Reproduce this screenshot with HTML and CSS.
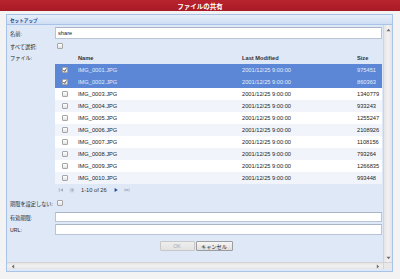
FILE: index.html
```html
<!DOCTYPE html>
<html lang="ja">
<head>
  <meta charset="UTF-8">
  <meta name="viewport" content="width=device-width, initial-scale=1.0">
  <title>ファイルの共有</title>
  <link rel="stylesheet" href="styles.css">
</head>
<body>

<div class="window">
  <div class="titlebar">ファイルの共有</div>
  <div class="frame">
    <div class="panel">
      <div class="panel-head">セットアップ</div>
      <div class="panel-body">
        <div class="content">

          <div class="row row-name">
            <div class="label">名前:</div>
            <div class="field"><div class="input">share</div></div>
          </div>

          <div class="row row-check">
            <div class="label">すべて選択:</div>
            <div class="field"><span class="cb"></span></div>
          </div>

          <div class="row row-files">
            <div class="label label-top">ファイル:</div>
            <div class="field">
              <div class="grid">
                <div class="grid-row grid-head">
                  <div></div>
                  <div class="cell">Name</div>
                  <div class="cell">Last Modified</div>
                  <div class="cell">Size</div>
                </div>
                <div class="grid-row sel">
                  <div class="cell-cb"><span class="cb checked"><svg width="4" height="4" viewBox="0 0 4 4"><path d="M0.4 2 L1.6 3.3 L3.6 0.5" fill="none" stroke="#333" stroke-width="0.9"/></svg></span></div>
                  <div class="cell">IMG_0001.JPG</div>
                  <div class="cell">2001/12/25 9:00:00</div>
                  <div class="cell">975451</div>
                </div>
                <div class="grid-row sel">
                  <div class="cell-cb"><span class="cb checked"><svg width="4" height="4" viewBox="0 0 4 4"><path d="M0.4 2 L1.6 3.3 L3.6 0.5" fill="none" stroke="#333" stroke-width="0.9"/></svg></span></div>
                  <div class="cell">IMG_0002.JPG</div>
                  <div class="cell">2001/12/25 9:00:00</div>
                  <div class="cell">860363</div>
                </div>
                <div class="grid-row odd">
                  <div class="cell-cb"><span class="cb"></span></div>
                  <div class="cell">IMG_0003.JPG</div>
                  <div class="cell">2001/12/25 9:00:00</div>
                  <div class="cell">1340779</div>
                </div>
                <div class="grid-row even">
                  <div class="cell-cb"><span class="cb"></span></div>
                  <div class="cell">IMG_0004.JPG</div>
                  <div class="cell">2001/12/25 9:00:00</div>
                  <div class="cell">933243</div>
                </div>
                <div class="grid-row odd">
                  <div class="cell-cb"><span class="cb"></span></div>
                  <div class="cell">IMG_0005.JPG</div>
                  <div class="cell">2001/12/25 9:00:00</div>
                  <div class="cell">1255247</div>
                </div>
                <div class="grid-row even">
                  <div class="cell-cb"><span class="cb"></span></div>
                  <div class="cell">IMG_0006.JPG</div>
                  <div class="cell">2001/12/25 9:00:00</div>
                  <div class="cell">2108926</div>
                </div>
                <div class="grid-row odd">
                  <div class="cell-cb"><span class="cb"></span></div>
                  <div class="cell">IMG_0007.JPG</div>
                  <div class="cell">2001/12/25 9:00:00</div>
                  <div class="cell">1108156</div>
                </div>
                <div class="grid-row even">
                  <div class="cell-cb"><span class="cb"></span></div>
                  <div class="cell">IMG_0008.JPG</div>
                  <div class="cell">2001/12/25 9:00:00</div>
                  <div class="cell">793264</div>
                </div>
                <div class="grid-row odd">
                  <div class="cell-cb"><span class="cb"></span></div>
                  <div class="cell">IMG_0009.JPG</div>
                  <div class="cell">2001/12/25 9:00:00</div>
                  <div class="cell">1266835</div>
                </div>
                <div class="grid-row even">
                  <div class="cell-cb"><span class="cb"></span></div>
                  <div class="cell">IMG_0010.JPG</div>
                  <div class="cell">2001/12/25 9:00:00</div>
                  <div class="cell">993448</div>
                </div>
                <div class="pager">
                  <span class="pg-icon"><svg width="6" height="6" viewBox="0 0 6 6"><rect x="0.8" y="1.2" width="0.8" height="3.6" fill="#a4adb8"/><path d="M5 1.2 L2.2 3 L5 4.8 Z" fill="#a4adb8"/></svg></span>
                  <span class="pg-icon pg-prev"><svg width="6" height="6" viewBox="0 0 6 6"><circle cx="3" cy="3" r="2.6" fill="#cbd6e6"/><path d="M3.8 1.6 L1.9 3 L3.8 4.4 Z" fill="#9aa6b6"/></svg></span>
                  <span class="pg-text">1-10 of 26</span>
                  <span class="pg-icon pg-next"><svg width="6" height="6" viewBox="0 0 6 6"><path d="M1.6 1 L4.8 3 L1.6 5 Z" fill="#1f4f9e"/></svg></span>
                  <span class="pg-icon pg-last"><svg width="6" height="6" viewBox="0 0 6 6"><path d="M0.6 1.4 L2.6 3 L0.6 4.6 Z M2.6 1.4 L4.6 3 L2.6 4.6 Z" fill="#a4adb8"/><rect x="4.7" y="1.4" width="0.7" height="3.2" fill="#a4adb8"/></svg></span>
                </div>
              </div>
            </div>
          </div>

          <div class="row row-expire">
            <div class="label">期限を設定しない:</div>
            <div class="field"><span class="cb"></span></div>
          </div>

          <div class="row row-date">
            <div class="label">有効期限:</div>
            <div class="field"><div class="input input-date"></div></div>
          </div>

          <div class="row row-url">
            <div class="label">URL:</div>
            <div class="field"><div class="input input-url"></div></div>
          </div>

          <div class="buttons">
            <button class="btn btn-ok" disabled>OK</button>
            <button class="btn btn-cancel">キャンセル</button>
          </div>

        </div>
        <div class="vscroll">
          <svg width="5" height="4" viewBox="0 0 5 4"><path d="M0.5 3.2 L2.5 0.8 L4.5 3.2 Z" fill="#6d6d6d"/></svg>
          <svg width="5" height="4" viewBox="0 0 5 4"><path d="M0.5 0.8 L2.5 3.2 L4.5 0.8 Z" fill="#6d6d6d"/></svg>
        </div>
        <div class="hscroll">
          <svg width="4" height="5" viewBox="0 0 4 5"><path d="M3.2 0.5 L0.8 2.5 L3.2 4.5 Z" fill="#6d6d6d"/></svg>
          <svg width="4" height="5" viewBox="0 0 4 5"><path d="M0.8 0.5 L3.2 2.5 L0.8 4.5 Z" fill="#6d6d6d"/></svg>
        </div>
        <div class="corner"></div>
      </div>
    </div>
  </div>
</div>

</body>
</html>
```

FILE: styles.css
```css
body {
  margin: 0;
  font-family: "Liberation Sans", Arial, "Noto Sans CJK JP", sans-serif;
  font-size: 5.7px;
  color: #222;
  background-color: #f3f3f3;
}
.window {
  width: 400px;
  height: 279px;
  display: flex;
  flex-direction: column;
  background-color: #f3f3f3;
}
.titlebar {
  height: 11px;
  background: linear-gradient(#b9232e, #a81b25);
  color: #fff;
  font-weight: bold;
  font-size: 6.5px;
  display: flex;
  align-items: center;
  justify-content: center;
}
.frame {
  flex: 1;
  padding: 3px 7px 7px 6px;
  min-height: 0;
}
.panel {
  height: 100%;
  box-sizing: border-box;
  border: 1px solid #a9c3e8;
  background-color: #dfe8f6;
  display: flex;
  flex-direction: column;
}
.panel-head {
  height: 9px;
  border-bottom: 1px solid #a9c3e8;
  background: linear-gradient(#e6eef9, #cfdef3);
  color: #15428b;
  font-weight: bold;
  font-size: 4.6px;
  padding-left: 3px;
  display: flex;
  align-items: center;
}
.panel-body {
  flex: 1;
  min-height: 0;
  display: grid;
  grid-template-columns: 1fr 9px;
  grid-template-rows: 1fr 7px;
  padding-bottom: 2px;
}
.content {
  padding: 2px 1px 0 3px;
  overflow: hidden;
}
.row {
  display: flex;
  align-items: center;
}
.label {
  width: 45px;
  flex: none;
  font-size: 5.2px;
  color: #222;
}
.label-top {
  align-self: flex-start;
  height: 12px;
  line-height: 12px;
}
.field {
  flex: 1;
  display: flex;
  align-items: center;
}
.row-name {
  height: 12px;
  margin-bottom: 1px;
}
.row-check {
  height: 12px;
}
.row-expire {
  height: 14px;
}
.row-date {
  margin-top: 2px;
}
.row-url {
  margin-top: 2px;
}
.input {
  width: 100%;
  height: 12px;
  box-sizing: border-box;
  border: 1px solid #b9c4d6;
  border-top-color: #a9b4c6;
  background-color: #fff;
  padding-left: 2px;
  display: flex;
  align-items: center;
}
.input-date {
  height: 10px;
}
.input-url {
  height: 11px;
}
.cb {
  width: 6px;
  height: 6px;
  box-sizing: border-box;
  border: 1px solid #a6a6a6;
  border-radius: 1px;
  background: linear-gradient(#fff, #e2e2e2);
  display: inline-flex;
  align-items: center;
  justify-content: center;
  margin-left: 2px;
}
.cb svg {
  display: block;
}
.grid {
  width: 100%;
}
.grid-row {
  display: grid;
  grid-template-columns: 20px 164px 115px 1fr;
  height: 12px;
  align-items: center;
}
.grid-head {
  font-weight: bold;
  color: #333;
}
.cell {
  padding-left: 3px;
  white-space: nowrap;
  overflow: hidden;
}
.cell-cb {
  display: flex;
  justify-content: center;
}
.cell-cb .cb {
  margin-left: 0;
}
.odd {
  background-color: #fff;
}
.even {
  background-color: #f1f5fb;
}
.sel {
  background-color: #5b87d6;
  color: #e4ecf9;
}
.pager {
  height: 12px;
  display: flex;
  align-items: center;
  padding-left: 3px;
}
.pg-icon {
  width: 6px;
  height: 6px;
  display: inline-block;
}
.pg-icon svg {
  display: block;
}
.pg-prev {
  margin-left: 5px;
}
.pg-text {
  margin-left: 6px;
  color: #333;
}
.pg-next {
  margin-left: 6px;
}
.pg-last {
  margin-left: 5px;
}
.buttons {
  display: flex;
  justify-content: center;
  gap: 1px;
  margin-top: 6px;
}
.btn {
  height: 10px;
  padding: 0;
  font-family: inherit;
  font-size: 5.2px;
  border: 1px solid #b0b0b0;
  border-radius: 1px;
  background: linear-gradient(#f6f6f6, #dedede);
}
.btn-ok {
  width: 35px;
  color: #a8a8a8;
  border-color: #c8c8c8;
  background: linear-gradient(#eeeeee, #e2e2e2);
}
.btn-cancel {
  width: 37px;
  color: #222;
  border-color: #9c9c9c;
}
.vscroll {
  grid-row: 1;
  grid-column: 2;
  background: linear-gradient(to right, #e4e4e4, #f2f2f2 50%, #e4e4e4);
  border-left: 1px solid #d4d4d4;
  display: flex;
  flex-direction: column;
  justify-content: space-between;
  align-items: center;
  padding: 3px 0 2px;
}
.vscroll svg, .hscroll svg {
  display: block;
}
.hscroll {
  grid-row: 2;
  grid-column: 1;
  background: linear-gradient(#e4e4e4, #f2f2f2 50%, #e4e4e4);
  border-top: 1px solid #d4d4d4;
  display: flex;
  justify-content: space-between;
  align-items: center;
  padding: 0 3px 0 4px;
}
.corner {
  grid-row: 2;
  grid-column: 2;
  background-color: #e8e8e8;
  border-top: 1px solid #d4d4d4;
  border-left: 1px solid #d4d4d4;
}
```
